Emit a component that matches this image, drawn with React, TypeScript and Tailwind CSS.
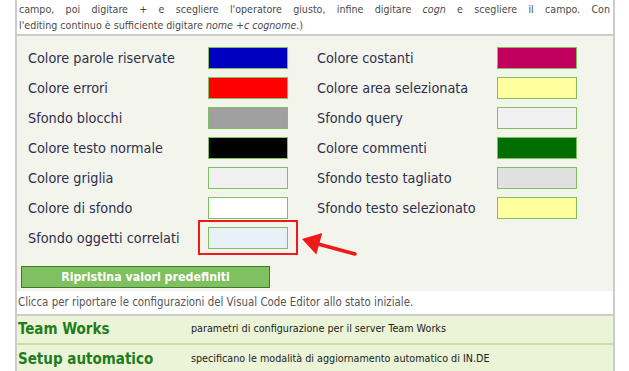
import React from "react";

type Item = { label: string; color: string };

const left: Item[] = [
  { label: "Colore parole riservate", color: "bg-[#0000c0]" },
  { label: "Colore errori", color: "bg-[#ff0000]" },
  { label: "Sfondo blocchi", color: "bg-[#a0a0a0]" },
  { label: "Colore testo normale", color: "bg-[#000000]" },
  { label: "Colore griglia", color: "bg-[#f0f0f0]" },
  { label: "Colore di sfondo", color: "bg-[#ffffff]" },
  { label: "Sfondo oggetti correlati", color: "bg-[#eaf0f8]" },
];

const right: Item[] = [
  { label: "Colore costanti", color: "bg-[#c0005a]" },
  { label: "Colore area selezionata", color: "bg-[#ffffa0]" },
  { label: "Sfondo query", color: "bg-[#f0f0f0]" },
  { label: "Colore commenti", color: "bg-[#006f00]" },
  { label: "Sfondo testo tagliato", color: "bg-[#e0e0e0]" },
  { label: "Sfondo testo selezionato", color: "bg-[#ffffa0]" },
];

function Swatch({ color }: { color: string }) {
  return <div className={`w-[80px] h-[22px] border border-[#80c060] ${color}`} />;
}

function Label({ text, extra = "" }: { text: string; extra?: string }) {
  return (
    <div className={`flex items-center h-[22px] text-[14.3px] text-[#2e2e4e] leading-none whitespace-nowrap ${extra}`}>
      {text}
    </div>
  );
}

export default function App() {
  return (
    <div className="relative w-[629px] h-[371px] overflow-hidden bg-white font-['DejaVu_Sans_Condensed','DejaVu_Sans',sans-serif]">
      <div className="ml-[15px] w-[600px] border-x-2 border-[#cccccc]">
        {/* top text */}
        <div className="h-[33px] overflow-hidden flex flex-col justify-end pl-[2px] pr-[3px] pb-[1px] border-b-2 border-[#cccccc] box-content text-[10.6px] leading-[16px] text-[#4a4a4a] whitespace-nowrap">
          <p className="text-justify [text-align-last:justify]">
            nome e cognome, per esempio, digitare nome e scegliere il campo, poi digitare cogn e il tipo di ricerca sul
          </p>
          <p className="text-justify [text-align-last:justify]">
            campo, poi digitare + e scegliere l'operatore giusto, infine digitare <i>cogn</i> e scegliere il campo. Con
          </p>
          <p>
            l'editing continuo è sufficiente digitare <i>nome +c cognome</i>.)
          </p>
        </div>

        {/* panel */}
        <div className="bg-[#f3f4ec] pt-[11px] pb-[3px]">
          <div className="grid grid-cols-[180px_80px_209px_80px] gap-y-[8px] pl-[11px]">
            {left.map((l, i) => (
              <React.Fragment key={i}>
                <Label text={l.label} />
                <Swatch color={l.color} />
                {right[i] ? (
                  <>
                    <Label text={right[i].label} extra="pl-[29px]" />
                    <Swatch color={right[i].color} />
                  </>
                ) : (
                  <>
                    <div />
                    <div />
                  </>
                )}
              </React.Fragment>
            ))}
          </div>
          <div className="mt-[17px] ml-[4px] w-[249px] h-[22px] bg-[#80c060] border border-[#3a7a2a] flex items-center justify-center text-white font-bold text-[12.3px] leading-none">
            Ripristina valori predefiniti
          </div>
        </div>

        {/* info row */}
        <div className="h-[25px] flex items-center pl-[1px] bg-white text-[11.4px] text-[#555555] border-b-2 border-[#cccccc] whitespace-nowrap">
          Clicca per riportare le configurazioni del Visual Code Editor allo stato iniziale.
        </div>

        {/* section rows */}
        <div className="h-[29px] flex items-center bg-[#ebf4d7] border-b-2 border-[#cfdca8] whitespace-nowrap">
          <div className="w-[174px] pl-[1px] text-[15px] font-bold text-[#1e7e1e] leading-none">Team Works</div>
          <div className="text-[10.7px] text-[#222222]">parametri di configurazione per il server Team Works</div>
        </div>
        <div className="h-[29px] flex items-center bg-[#ebf4d7] whitespace-nowrap">
          <div className="w-[174px] pl-[1px] text-[15px] font-bold text-[#1e7e1e] leading-none">Setup automatico</div>
          <div className="text-[10.7px] text-[#222222]">specificano le modalità di aggiornamento automatico di IN.DE</div>
        </div>
      </div>

      {/* red highlight */}
      <div className="absolute left-[198px] top-[220px] w-[100px] h-[35px] border-2 border-[#f01818]" />
      <svg className="absolute left-0 top-0" width="629" height="371" viewBox="0 0 629 371">
        <line x1="355" y1="254" x2="318" y2="244" stroke="#f01818" strokeWidth="3.5" strokeLinecap="round" />
        <polygon points="302,239 322.3,233 316.3,254.5" fill="#f01818" />
      </svg>
    </div>
  );
}
